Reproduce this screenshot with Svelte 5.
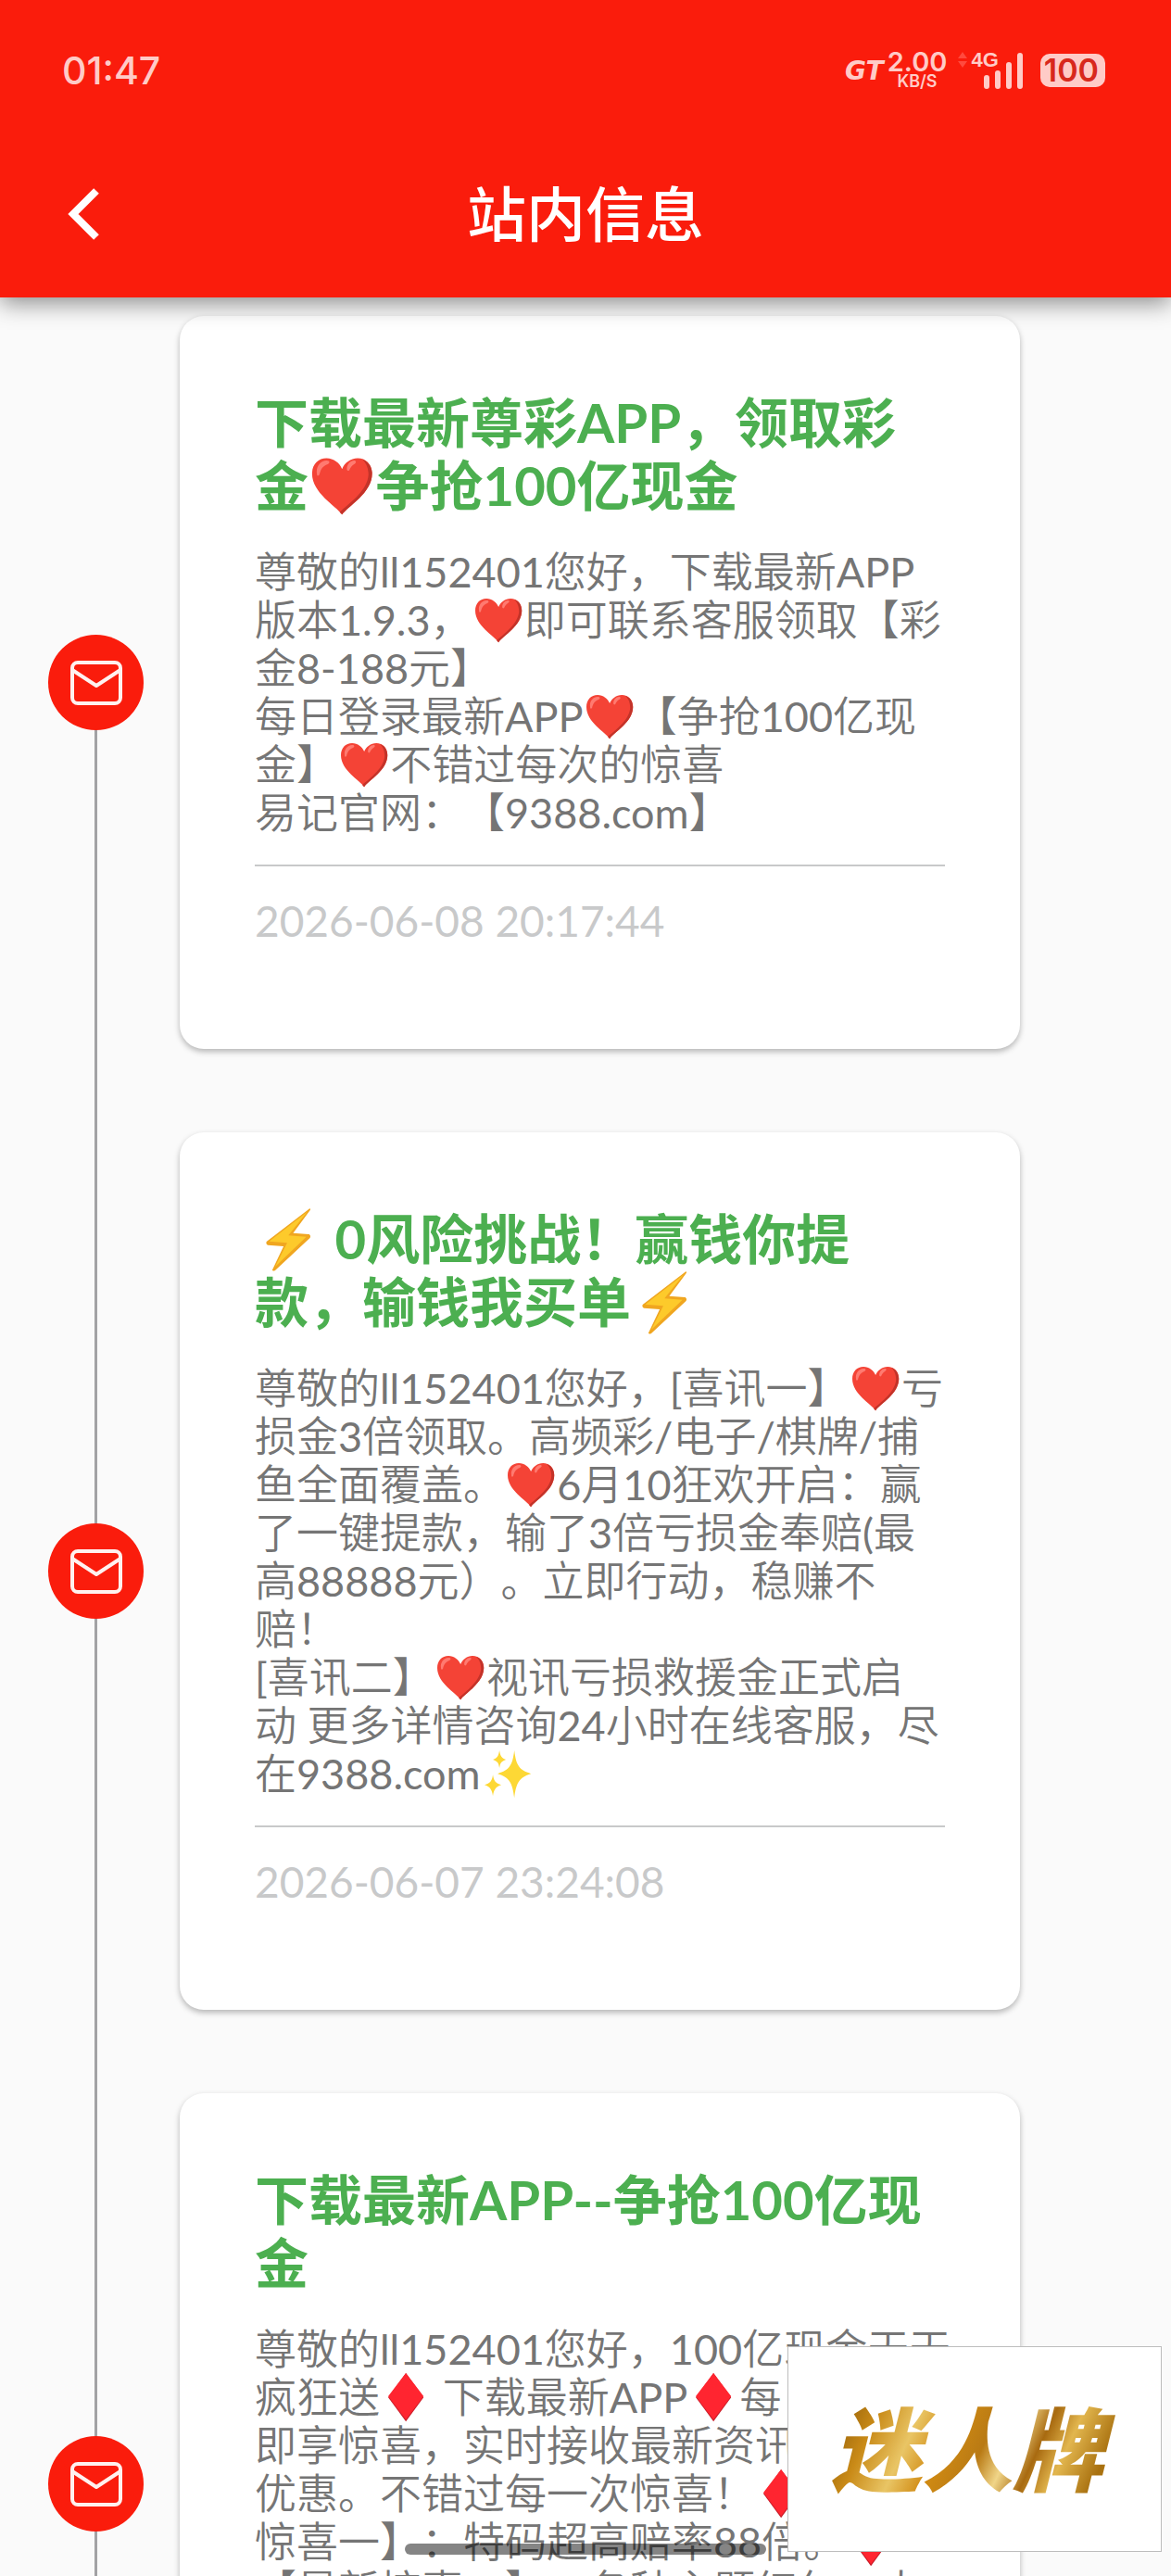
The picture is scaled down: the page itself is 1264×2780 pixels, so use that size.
<script lang="ts">
  type Message = {
    title: string[];
    body: string[];
    date: string;
  };

  const messages: Message[] = [
    {
      title: ["下载最新尊彩APP，领取彩", "金❤争抢100亿现金"],
      body: [
        "尊敬的ll152401您好，下载最新APP",
        "版本1.9.3，❤即可联系客服领取【彩",
        "金8-188元】",
        "每日登录最新APP❤【争抢100亿现",
        "金】❤不错过每次的惊喜",
        "易记官网：【9388.com】",
      ],
      date: "2026-06-08 20:17:44",
    },
    {
      title: ["⚡ 0风险挑战！赢钱你提", "款，输钱我买单⚡"],
      body: [
        "尊敬的ll152401您好，[喜讯一】❤亏",
        "损金3倍领取。高频彩/电子/棋牌/捕",
        "鱼全面覆盖。❤6月10狂欢开启：赢",
        "了一键提款，输了3倍亏损金奉赔(最",
        "高88888元）。立即行动，稳赚不",
        "赔！",
        "[喜讯二】❤视讯亏损救援金正式启",
        "动 更多详情咨询24小时在线客服，尽",
        "在9388.com✨",
      ],
      date: "2026-06-07 23:24:08",
    },
    {
      title: ["下载最新APP--争抢100亿现", "金"],
      body: [
        "尊敬的ll152401您好，100亿现金天天",
        "疯狂送♦ 下载最新APP♦每日登录",
        "即享惊喜，实时接收最新资讯和",
        "优惠。不错过每一次惊喜！♦【最新",
        "惊喜一】：特码超高赔率88倍。♦",
        "【最新惊喜二】：各种主题红包，大",
        "奖等你拿！",
      ],
      date: "2026-06-06 20:17:44",
    },
  ];

  const split = (line: string) => line.split(/(❤|⚡|✨|♦)/);
</script>

<svelte:head>
  <title>站内信息</title>
</svelte:head>

{#snippet rich(line: string)}
  {#each split(line) as part}
    {#if part === "❤"}
      <svg class="emoji" viewBox="0 0 56 56" role="img" aria-label="❤">
        <path fill="#f44336" d="M28 52C23 45 3 34 3 18 3 10 8 5 15 5c6 0 11 4 13 9 2-5 7-9 13-9 7 0 12 5 12 13 0 16-20 27-25 34z" />
        <path fill="#c33329" d="M45 6c5 2 8 6 8 12 0 16-20 27-25 34-1-1-1-1-2-2 9-8 23-18 24-31 0-6-2-10-5-13z" />
        <path fill="#ff7a70" d="M7 18c-1-6 3-11 8-11 3 0 3 2 1 3-5 2-6 5-7 9-1 1-2 1-2-1zM32 14c0-4 3-7 6-7 2 0 2 2 0 3-2 1-3 3-4 5-1 1-2 0-2-1z" />
      </svg>
    {:else if part === "⚡"}
      <svg class="emoji" viewBox="0 0 56 56" role="img" aria-label="⚡">
        <path fill="#f0a620" d="M45 3 10 30c-1 1 0 3 1 3l13 1-9 19c-1 1 0 2 2 1l29-27c1-1 0-3-1-3l-13-1 14-19c1-1 0-2-1-1z" />
        <path fill="#fdca2b" d="M44 5 12 30l15 1-10 20 26-25-15-1z" />
      </svg>
    {:else if part === "✨"}
      <svg class="emoji" viewBox="0 0 56 56" role="img" aria-label="✨">
        <path fill="#fdd835" d="M36 3c2 16 5 21 18 25-13 4-16 10-18 26-2-16-5-22-18-26 13-4 16-9 18-25zM20 3c1 6 2 8 7 10-5 2-6 3-7 9-1-6-2-7-7-9 5-2 6-4 7-10zM13 29c1 7 3 9 9 11-6 2-8 5-9 12-1-7-3-10-9-12 6-2 8-4 9-11z" />
      </svg>
    {:else if part === "♦"}
      <svg class="emoji" viewBox="0 0 56 56" role="img" aria-label="♦">
        <path fill="#c81c28" d="M28 2 47 28 28 54 9 28z" />
        <path fill="#ff2530" d="M28 2 47 27 28 52 9 27z" />
      </svg>
    {:else}{part}{/if}
  {/each}
{/snippet}

<div class="screen">
  <header>
    <div class="status">
      <span class="time">01:47</span>
      <div class="indicators">
        <span class="gt">GT</span>
        <span class="speed"><b>2.00</b><small>KB/S</small></span>
        <div class="network">
          <svg width="10" height="18" viewBox="0 0 10 18" aria-hidden="true">
            <path fill="#ff4a3e" d="M5 0l5 7H0zM5 17l5-7H0z" />
          </svg>
          <span>4G</span>
          <svg class="bars" width="42" height="40" viewBox="0 0 42 40" aria-hidden="true">
            <path stroke="#ffcbc7" stroke-width="6" stroke-linecap="round" d="M3 28v9M15 23v14M27 14v23M39 4v33" />
          </svg>
        </div>
        <span class="battery">100</span>
      </div>
    </div>
    <div class="bar">
      <button class="back" aria-label="返回">
        <svg width="36" height="58" viewBox="0 0 36 58" aria-hidden="true">
          <path fill="none" stroke="#fff" stroke-width="8" d="M32 4 7 29l25 25" />
        </svg>
      </button>
      <h1>站内信息</h1>
    </div>
  </header>

  <main>
    <ol class="timeline">
      {#each messages as message}
        <li>
          <div class="marker">
            <span class="dot">
              <svg width="58" height="50" viewBox="0 0 58 50" fill="none" stroke="#fff1ef" stroke-width="4" aria-hidden="true">
                <rect x="3" y="3" width="52" height="44" rx="6" />
                <path stroke-linejoin="round" d="M3 11l26 17 26-17" />
              </svg>
            </span>
          </div>
          <article>
            <h2>
              {#each message.title as line}
                <span class="line">{@render rich(line)}</span>
              {/each}
            </h2>
            <p>
              {#each message.body as line}
                <span class="line">{@render rich(line)}</span>
              {/each}
            </p>
            <time>{message.date}</time>
          </article>
        </li>
      {/each}
    </ol>
  </main>

  <a class="promo" href="#promo"><span>迷人牌</span></a>
  <div class="home-indicator"></div>
</div>

<style>
  :global(body) {
    margin: 0;
    background: #fafafa;
  }

  .screen {
    position: relative;
    display: flex;
    flex-direction: column;
    height: 100vh;
    overflow: hidden;
    background: #fafafa;
    font-family: Lato, "Noto Sans CJK SC", sans-serif;
    text-spacing-trim: space-all;
  }

  header {
    z-index: 1;
    flex: none;
    background: #fa1c0c;
    box-shadow: 0 6px 24px rgb(0 0 0 / 45%);
    color: #fff;
  }

  .status {
    display: flex;
    align-items: center;
    justify-content: space-between;
    height: 112px;
    padding: 40px 71px 0 67px;
    box-sizing: border-box;
    color: #ffcbc7;
    font-family: Inter, sans-serif;
  }

  .time {
    font-size: 41px;
    font-weight: 500;
  }

  .indicators,
  .network {
    display: flex;
    align-items: center;
  }

  .gt {
    margin-right: 4px;
    font: italic bold 28px "DejaVu Sans", sans-serif;
  }

  .speed {
    display: flex;
    flex-direction: column;
    align-items: center;
    margin-right: 12px;
  }

  .speed b {
    font-size: 29px;
    font-weight: 600;
    line-height: 24px;
  }

  .speed small {
    font-size: 18px;
    font-weight: 600;
    line-height: 18px;
  }

  .network {
    align-items: flex-start;
    margin-right: 19px;
  }

  .network span {
    margin: 0 -16px 0 4px;
    font: bold 22px/18px "Liberation Sans", sans-serif;
  }

  .battery {
    padding: 0 4px;
    border-right: 3px solid #ffcbc7;
    border-radius: 10px;
    background: #ffcbc7;
    color: #d8281c;
    font-size: 34px;
    font-weight: 600;
    line-height: 36px;
  }

  .bar {
    display: grid;
    grid-template-columns: 1fr auto 1fr;
    align-items: center;
    height: 209px;
    padding: 28px 72px 0;
    box-sizing: border-box;
  }

  .back {
    display: flex;
    justify-self: start;
    padding: 0;
    border: 0;
    background: none;
  }

  h1 {
    margin: 0;
    font-size: 64px;
    font-weight: 500;
    line-height: 72px;
  }

  main {
    flex: 1;
    overflow: hidden;
  }

  .timeline {
    display: flex;
    flex-direction: column;
    gap: 90px;
    margin: 0;
    padding: 20px 163px 90px 52px;
    list-style: none;
  }

  li {
    display: flex;
    gap: 39px;
  }

  .marker {
    position: relative;
    display: flex;
    flex: none;
    align-items: center;
    width: 103px;
  }

  /* rail behind the dots, reaching over the gap between two cards */
  .marker::before {
    content: "";
    position: absolute;
    top: -90px;
    bottom: 0;
    left: 50px;
    width: 3px;
    background: #a2a2a4;
  }

  li:first-child .marker::before {
    top: 50%;
  }

  .dot {
    z-index: 1;
    display: flex;
    align-items: center;
    justify-content: center;
    width: 103px;
    height: 103px;
    border-radius: 50%;
    background: #fa1c0c;
  }

  article {
    flex: 1;
    min-width: 0;
    padding: 81px 81px 112px;
    border-radius: 26px;
    background: #fff;
    box-shadow: 0 3px 6px rgb(0 0 0 / 28%);
  }

  .line {
    display: block;
    white-space: nowrap;
  }

  h2 {
    margin: 0 0 33px;
    color: #4caf50;
    font-size: 58px;
    font-weight: 700;
    line-height: 68px;
  }

  p {
    margin: 0;
    padding-bottom: 30px;
    border-bottom: 2px solid #c8c9ca;
    color: #757575;
    font-family: Lato, "Noto Sans CJK SC DemiLight", "Noto Sans CJK SC", sans-serif;
    font-size: 45px;
    font-weight: 400;
    line-height: 52px;
  }

  time {
    display: block;
    margin-top: 33px;
    color: #c8c9ca;
    font-size: 46px;
    line-height: 52px;
  }

  .emoji {
    width: 1.25em;
    height: 1.25em;
    margin: -0.25em 0;
  }

  .promo {
    position: absolute;
    right: 10px;
    bottom: 26px;
    z-index: 2;
    display: flex;
    align-items: center;
    justify-content: center;
    width: 404px;
    height: 222px;
    border: 1px solid #bdbdbd;
    box-sizing: border-box;
    background: #fff;
    text-decoration: none;
  }

  .promo span {
    padding: 0 24px 0 8px;
    background: linear-gradient(115deg, #8f5c08 5%, #c98a17 18%, #e9c565 30%, #d18b13 40%, #b97a14 52%, #f0d588 60%, #a86a10 68%, #e2b64e 76%, #a8700f 88%, #c99320);
    background-clip: text;
    color: transparent;
    font-size: 98px;
    font-style: italic;
    font-weight: 900;
    line-height: 120px;
  }

  .home-indicator {
    position: absolute;
    right: 0;
    bottom: 23px;
    left: 0;
    z-index: 1;
    width: 390px;
    height: 12px;
    margin: 0 auto;
    border-radius: 6px;
    background: rgb(0 0 0 / 48%);
  }
</style>
